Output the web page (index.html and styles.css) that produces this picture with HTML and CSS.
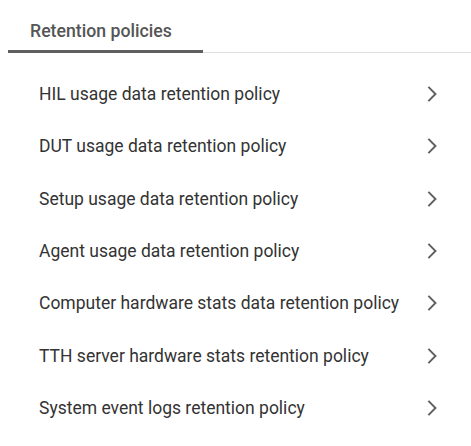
FILE: index.html
```html
<!DOCTYPE html>
<html>
<head>
<meta charset="utf-8">
<link rel="stylesheet" href="styles.css">
</head>
<body>
<div class="tabs">
  <div class="tab active">Retention policies</div>
</div>
<ul class="list">
  <li class="row"><span class="label">HIL usage data retention policy</span><svg class="chev" viewBox="0 0 24 24"><path d="M9.3 6.7L14.6 12 9.3 17.3"/></svg></li>
  <li class="row"><span class="label">DUT usage data retention policy</span><svg class="chev" viewBox="0 0 24 24"><path d="M9.3 6.7L14.6 12 9.3 17.3"/></svg></li>
  <li class="row"><span class="label">Setup usage data retention policy</span><svg class="chev" viewBox="0 0 24 24"><path d="M9.3 6.7L14.6 12 9.3 17.3"/></svg></li>
  <li class="row"><span class="label">Agent usage data retention policy</span><svg class="chev" viewBox="0 0 24 24"><path d="M9.3 6.7L14.6 12 9.3 17.3"/></svg></li>
  <li class="row"><span class="label">Computer hardware stats data retention policy</span><svg class="chev" viewBox="0 0 24 24"><path d="M9.3 6.7L14.6 12 9.3 17.3"/></svg></li>
  <li class="row"><span class="label">TTH server hardware stats retention policy</span><svg class="chev" viewBox="0 0 24 24"><path d="M9.3 6.7L14.6 12 9.3 17.3"/></svg></li>
  <li class="row"><span class="label">System event logs retention policy</span><svg class="chev" viewBox="0 0 24 24"><path d="M9.3 6.7L14.6 12 9.3 17.3"/></svg></li>
</ul>
</body>
</html>
```
FILE: styles.css
```css
html, body {
  margin: 0;
  padding: 0;
  background: #fff;
}
body {
  font-family: Roboto, "Liberation Sans", sans-serif;
  padding-left: 8px;
}
.tabs {
  display: flex;
  border-bottom: 1px solid #e0e0e0;
  height: 53px;
  box-sizing: border-box;
}
.tab {
  width: 195px;
  box-sizing: border-box;
  padding-left: 22px;
  padding-top: 21px;
  font-size: 17.7px;
  font-weight: 500;
  color: #555;
  height: 53px;
  border-bottom: 3px solid #5f5f5f;
  margin-bottom: -1px;
}
.list {
  list-style: none;
  margin: 0;
  padding: 15px 0 0 0;
}
.row {
  display: flex;
  align-items: center;
  justify-content: space-between;
  height: 52.33px;
  padding-left: 31px;
  padding-right: 23px;
}
.label {
  font-size: 17.5px;
  color: #333;
}
.chev {
  width: 32px;
  height: 32px;
  fill: none;
  stroke: #5f5f5f;
  stroke-width: 1.45;
}
```
